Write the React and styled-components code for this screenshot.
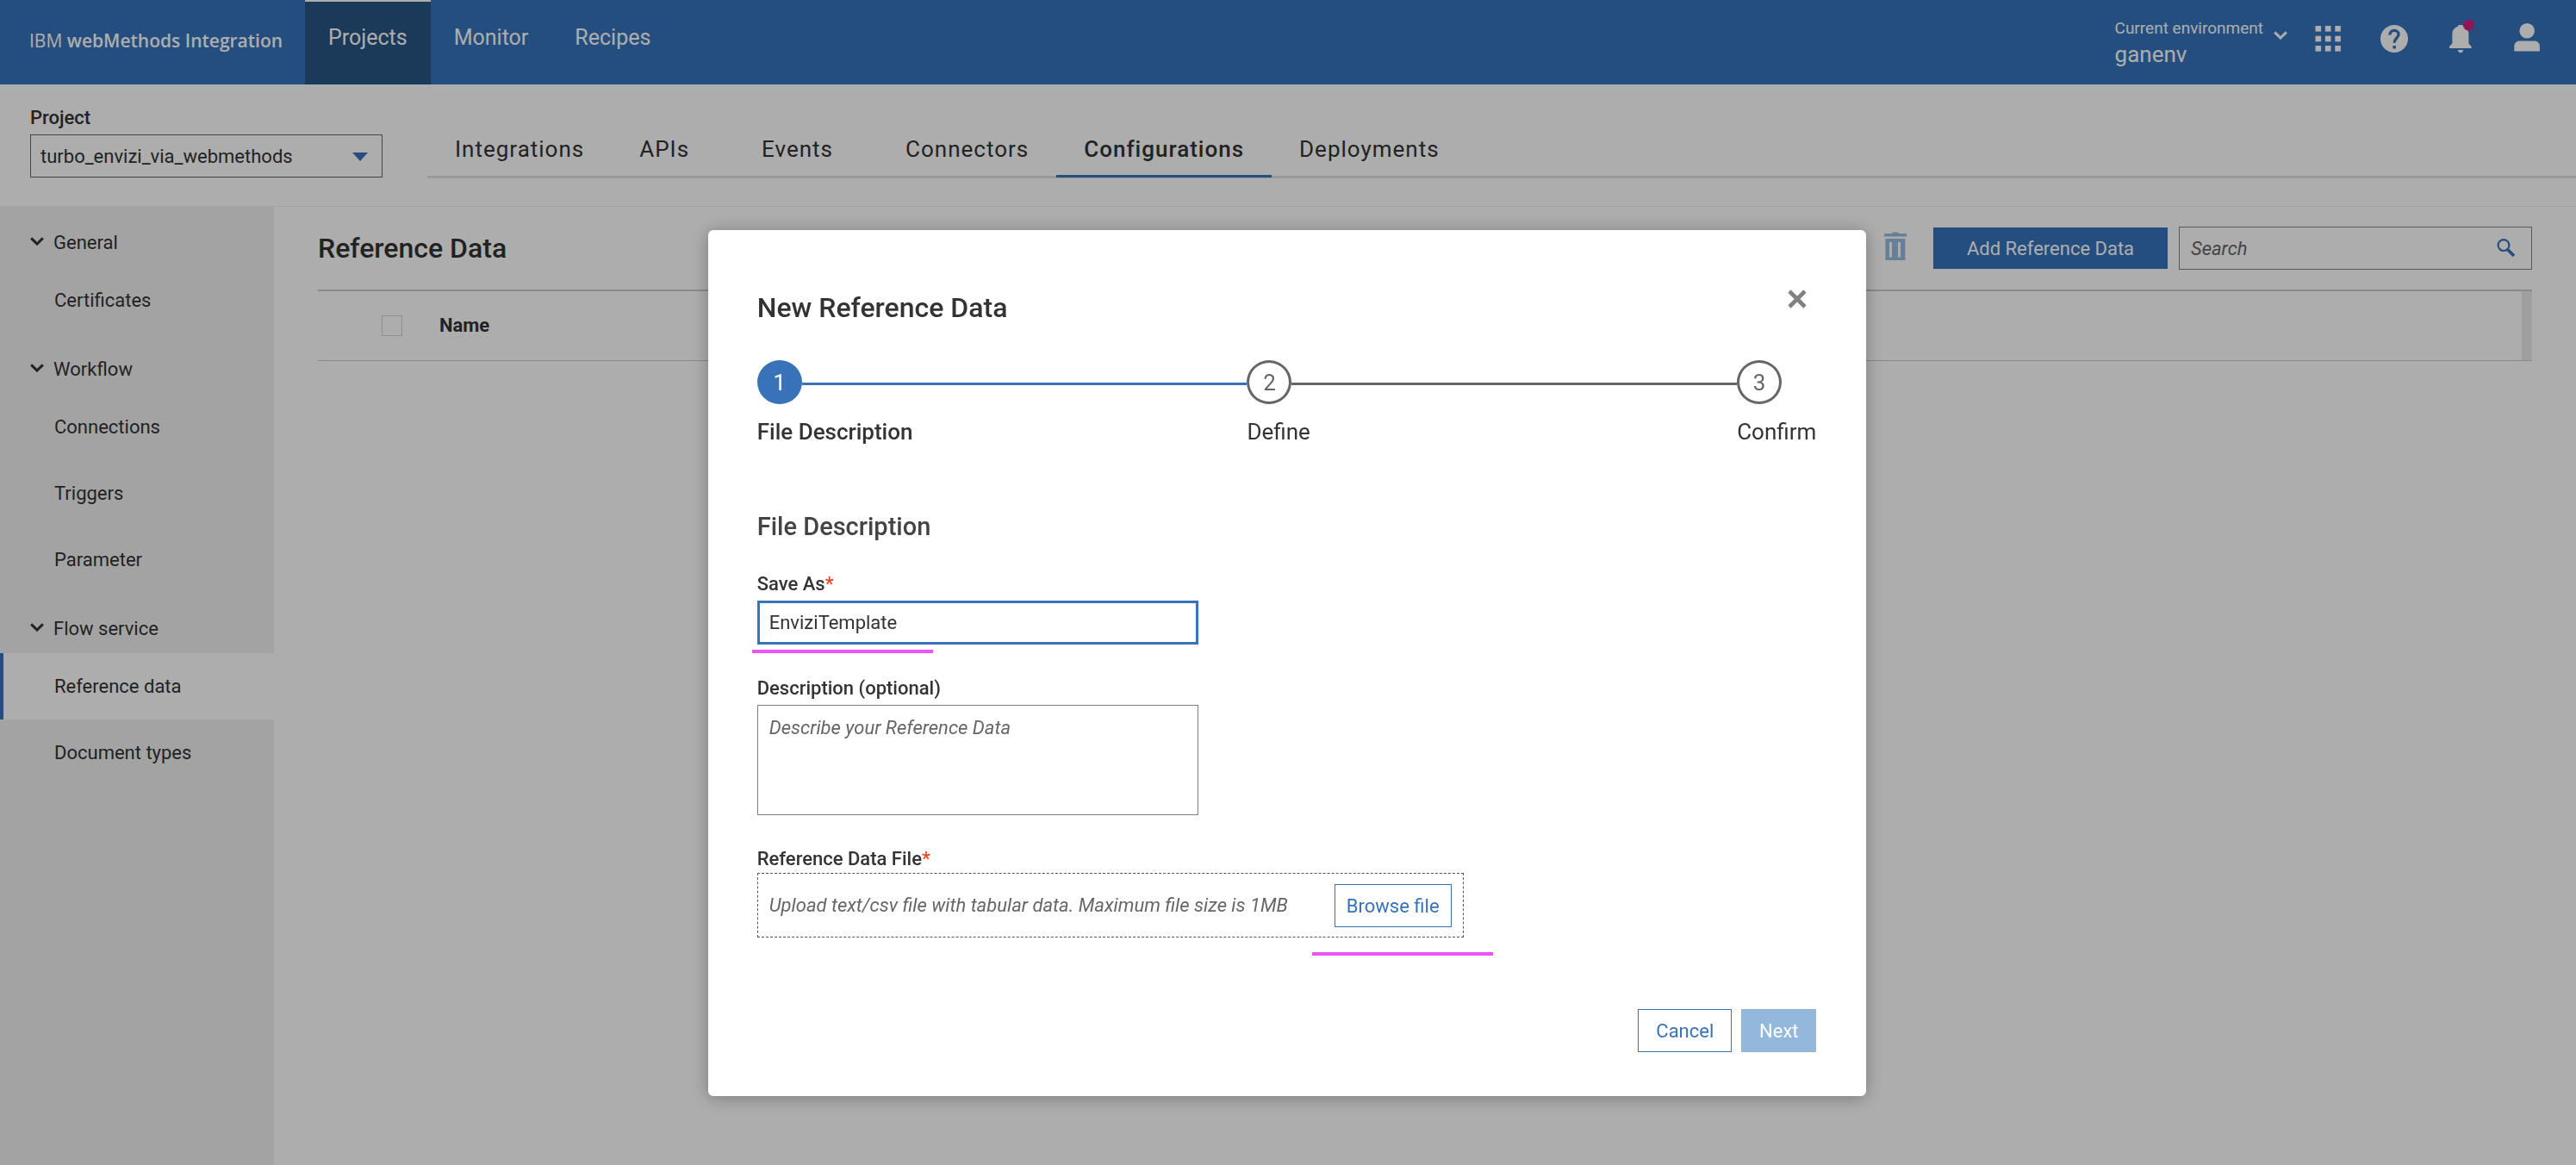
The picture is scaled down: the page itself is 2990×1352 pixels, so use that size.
import React from "react";
import styled, { createGlobalStyle, css } from "styled-components";

const c = {
  blue: "#3674bc",
  modalBlue: "#3873b9",
  navy: "#285483",
  ink: "#333333",
  muted: "#666666",
  panel: "#f1f1f1",
  line: "#cbcbcb",
  pale: "#94b7dc",
  marker: "#ee53f5",
};

const GlobalStyle = createGlobalStyle`
  *, *::before, *::after { box-sizing: border-box; }
  body { margin: 0; background: #fff; }
  body, button, input, textarea, select {
    font-family: Roboto, "Liberation Sans", sans-serif;
    font-size: 22px;
    font-weight: 400;
    line-height: 30px;
    color: ${c.ink};
  }
  button { cursor: pointer; }
  a { color: inherit; text-decoration: none; }
  h1, h2 { margin: 0; font-weight: 500; }
  ul, ol { margin: 0; padding: 0; list-style: none; }
`;

const Page = styled.div`
  display: flex;
  flex-direction: column;
  min-height: 100vh;
`;

/* Top bar */
const TopBar = styled.header`
  display: flex;
  height: 98px;
  padding-right: 19px;
  background: ${c.blue};
  color: #fff;
`;

const Brand = styled.div`
  display: flex;
  align-items: center;
  width: 354px;
  padding: 0 0 4px 34px;
  white-space: pre;
  font-family: "Open Sans", sans-serif;
  font-size: 21px;
  strong { font-weight: 600; }
`;

const TopNav = styled.nav`
  display: flex;
  flex: 1;
`;

const TopLink = styled.a`
  display: flex;
  align-items: center;
  padding: 0 27px 12px;
  border-top: 2px solid ${(p) => (p.$active ? "#fff" : "transparent")};
  background: ${(p) => (p.$active ? c.navy : "transparent")};
  font-size: 25px;
`;

const TopTools = styled.div`
  display: flex;
  align-items: center;
  padding-bottom: 9px;
`;

const Environment = styled.button`
  display: flex;
  align-items: flex-start;
  gap: 12px;
  margin-right: 8px;
  padding: 7px 0 0;
  border: 0;
  background: none;
  color: #fff;
  text-align: left;
  svg { margin-top: 18px; }
`;

const EnvironmentText = styled.span`
  display: flex;
  flex-direction: column;
  line-height: 30px;
  font-size: 26px;
  small { font-size: 19px; }
`;

const ToolButton = styled.button`
  display: flex;
  justify-content: center;
  width: 77px;
  padding: 0;
  border: 0;
  background: none;
  color: #fff;
`;

/* Project bar */
const ProjectBar = styled.section`
  display: flex;
  align-items: flex-end;
  gap: 52px;
  padding: 24px 0 32px 35px;
  border-bottom: 1px solid ${c.panel};
`;

const ProjectField = styled.div`
  display: flex;
  flex-direction: column;
  gap: 4px;
  width: 409px;
  padding-bottom: 1px;
  label { font-weight: 500; }
`;

const SelectWrap = styled.div`
  position: relative;
  svg {
    position: absolute;
    right: 17px;
    top: 21px;
    pointer-events: none;
  }
`;

const Select = styled.select`
  display: block;
  width: 100%;
  height: 50px;
  padding: 2px 11px 0;
  border: 1px solid ${c.muted};
  border-radius: 0;
  appearance: none;
  background: transparent;
`;

const Tabs = styled.nav`
  display: flex;
  flex: 1;
  border-bottom: 3px solid #e2e2e2;
`;

const Tab = styled.a`
  margin: 0 ${(p) => (p.$spaced ? 20 : 0)}px -2px 0;
  padding: 0 32px 15px;
  border-bottom: 3px solid ${(p) => (p.$active ? c.blue : "transparent")};
  font-size: 26px;
  font-weight: ${(p) => (p.$active ? 500 : 400)};
  letter-spacing: 1px;
`;

/* Body */
const Body = styled.div`
  display: flex;
  flex: 1;
`;

const Sidebar = styled.nav`
  width: 318px;
  background: ${c.panel};
`;

const GroupButton = styled.button`
  display: flex;
  align-items: center;
  gap: 11px;
  width: 100%;
  height: 70px;
  padding: 14px 0 0 35px;
  border: 0;
  background: none;
  svg { margin-bottom: 4px; }
`;

const SideLink = styled.a`
  display: flex;
  align-items: center;
  height: 77px;
  padding-left: 59px;
  border-left: 4px solid ${(p) => (p.$active ? c.blue : "transparent")};
  background: ${(p) => (p.$active ? "#fff" : "transparent")};
`;

const Main = styled.main`
  flex: 1;
  padding: 23px 51px 0;
`;

const Toolbar = styled.div`
  display: flex;
  align-items: center;
  margin-bottom: 23px;
`;

const PageTitle = styled.h1`
  flex: 1;
  font-size: 32px;
`;

const IconButton = styled.button`
  display: flex;
  margin-right: 31px;
  padding: 0 0 4px;
  border: 0;
  background: none;
`;

const buttonBase = css`
  height: 50px;
  padding: 2px 0 0;
  border: 1px solid ${c.modalBlue};
  border-radius: 0;
`;

const AddButton = styled.button`
  width: 272px;
  height: 48px;
  margin-right: 13px;
  padding: 2px 0 0;
  border: 0;
  background: ${c.blue};
  color: #fff;
`;

const SearchBox = styled.label`
  display: flex;
  align-items: center;
  width: 410px;
  height: 50px;
  padding: 0 18px 0 13px;
  border: 1px solid #808080;
`;

const SearchInput = styled.input`
  flex: 1;
  min-width: 0;
  padding: 2px 0 0;
  border: 0;
  outline: 0;
  background: none;
  &::placeholder { color: ${c.muted}; font-style: italic; opacity: 1; }
`;

const Table = styled.table`
  width: 100%;
  border-collapse: collapse;
  border-top: 2px solid ${c.line};
  border-bottom: 1px solid ${c.line};
  th {
    height: 81px;
    padding: 0;
    text-align: left;
    font-weight: 700;
  }
`;

const CheckCell = styled.th`
  width: 141px;
  && { padding-left: 74px; }
`;

const GutterCell = styled.th`
  width: 12px;
  background: #ebebeb;
`;

const Checkbox = styled.input`
  display: block;
  width: 24px;
  height: 24px;
  margin: 0;
  border: 1px solid #d2d2d2;
  appearance: none;
`;

/* Dialog */
const Backdrop = styled.div`
  position: fixed;
  inset: 0;
  display: flex;
  justify-content: center;
  align-items: flex-start;
  padding: 267px 2px 0 0;
  background: rgba(0, 0, 0, 0.32);
`;

const Dialog = styled.section`
  width: 45%;
  padding: 58px 58px 51px 57px;
  border-radius: 6px;
  background: #fff;
  box-shadow: 0 2px 20px rgba(0, 0, 0, 0.3);
`;

const DialogHeader = styled.div`
  display: flex;
  justify-content: space-between;
  margin-bottom: 41px;
`;

const DialogTitle = styled.h1`
  padding-top: 12px;
  font-size: 32px;
  line-height: 40px;
`;

const CloseButton = styled.button`
  display: flex;
  align-items: center;
  justify-content: center;
  width: 44px;
  height: 44px;
  padding: 0;
  border: 0;
  background: none;
`;

const Steps = styled.ol`
  display: flex;
  margin-bottom: 77px;
`;

const Step = styled.li`
  flex: 1;
  display: flex;
  flex-direction: column;
  gap: 17px;
  font-size: 26px;
  font-weight: ${(p) => (p.$current ? 500 : 400)};
  &:last-child { flex: none; }
`;

const StepTrack = styled.div`
  display: flex;
  align-items: center;
  &::after {
    content: "";
    flex: 1;
    height: 3px;
    margin-top: 4px;
    background: ${(p) => (p.$current ? c.modalBlue : c.muted)};
  }
  li:last-child > &::after { display: none; }
`;

const StepCircle = styled.span`
  display: flex;
  align-items: center;
  justify-content: center;
  width: 52px;
  height: 51px;
  border: 3px solid ${(p) => (p.$current ? c.modalBlue : c.muted)};
  border-radius: 50%;
  background: ${(p) => (p.$current ? c.modalBlue : "#fff")};
  color: ${(p) => (p.$current ? "#fff" : c.muted)};
  font-weight: 400;
`;

const SectionTitle = styled.h2`
  margin-bottom: 34px;
  color: #444;
  font-size: 29px;
  line-height: 36px;
`;

const Form = styled.form`
  display: flex;
  flex-direction: column;
  gap: 36px;
`;

const Field = styled.div`
  position: relative;
  display: flex;
  flex-direction: column;
  align-items: flex-start;
  gap: ${(p) => (p.$tight ? "1px" : "4px")};
  label { font-weight: 500; }
`;

const Required = styled.span`
  color: #ee4023;
`;

const TextInput = styled.input`
  width: 512px;
  height: 51px;
  padding: 0 11px;
  border: 3px solid ${c.modalBlue};
  border-radius: 0;
  outline: 0;
`;

const TextArea = styled.textarea`
  display: block;
  width: 512px;
  height: 128px;
  padding: 11px 13px;
  border: 1px solid #808080;
  border-radius: 0;
  resize: none;
  &::placeholder { color: ${c.muted}; font-style: italic; opacity: 1; }
`;

const DropZone = styled.div`
  display: flex;
  align-items: center;
  justify-content: space-between;
  width: 820px;
  height: 75px;
  padding: 0 13px;
  border: 1px dashed #555;
  color: ${c.muted};
  em { font-style: italic; }
`;

const OutlineButton = styled.button`
  ${buttonBase}
  width: ${(p) => p.$width}px;
  background: #fff;
  color: ${c.modalBlue};
`;

const NextButton = styled.button`
  ${buttonBase}
  width: 87px;
  border-color: ${c.pale};
  background: ${c.pale};
  color: #fff;
`;

const Marker = styled.span`
  position: absolute;
  left: ${(p) => p.$left}px;
  top: calc(100% + ${(p) => p.$below}px);
  width: 210px;
  height: 4px;
  background: ${c.marker};
`;

const DialogFooter = styled.div`
  display: flex;
  justify-content: flex-end;
  gap: 11px;
  margin-top: 83px;
`;

const Chevron = ({ width = 16, color = "currentColor", weight = 3 }) => (
  <svg width={width} height={(width * 10) / 16} viewBox="0 0 16 10" aria-hidden="true">
    <path d="M1.2 1.4 L8 8 L14.8 1.4" fill="none" stroke={color} strokeWidth={weight} />
  </svg>
);

const GridIcon = () => (
  <svg width="40" height="40" viewBox="0 0 40 40" fill="currentColor" aria-hidden="true">
    {[5, 16.7, 28].map((y) =>
      [5.5, 16.9, 28.3].map((x) => <rect key={`${x}-${y}`} x={x} y={y} width="6.6" height="6.6" />)
    )}
  </svg>
);

const HelpIcon = () => (
  <svg width="40" height="40" viewBox="0 0 40 40" aria-hidden="true">
    <circle cx="20" cy="20" r="16" fill="currentColor" />
    <path
      d="M14.9 15.6 C14.9 12.4 17 10.4 20 10.4 C23 10.4 25.1 12.4 25.1 15.1 C25.1 18.9 20.1 19.3 20.1 24.8"
      fill="none"
      stroke={c.blue}
      strokeWidth="3.3"
    />
    <rect x="18.4" y="28" width="3.5" height="3.5" fill={c.blue} />
  </svg>
);

const BellIcon = () => (
  <svg width="40" height="40" viewBox="0 0 40 40" aria-hidden="true">
    <path
      fill="currentColor"
      d="M17.3 4 H22.7 V5.6 C26.8 6.8 29.4 10 29.4 14.4 V25.4 L32.6 29 V31 H7 V29 L10.4 25.4 V14.4 C10.4 10 13.2 6.8 17.3 5.6 Z M16.8 33 H23.2 C23 35 21.7 36.2 20 36.2 C18.3 36.2 17 35 16.8 33 Z"
    />
    <circle cx="29.6" cy="4" r="6.6" fill="#cf2680" />
  </svg>
);

const BellSvgFrame = styled.span`
  display: flex;
  svg { overflow: visible; }
`;

const UserIcon = () => (
  <svg width="40" height="40" viewBox="0 0 40 40" fill="currentColor" aria-hidden="true">
    <circle cx="20.2" cy="10.7" r="8.8" />
    <path d="M5.3 34.4 V28.6 C5.3 25 8 22.4 11.6 22.4 H28.6 C32.2 22.4 34.9 25 34.9 28.6 V34.4 Z" />
  </svg>
);

const TrashIcon = () => (
  <svg width="26" height="34" viewBox="0 0 26 34" aria-hidden="true">
    <path
      fill="#98bbdf"
      fillRule="evenodd"
      d="M9 2 L10 0.6 H16 L17 2 H26 V5.4 H0 V2 Z M1.4 8 H24.4 V33 H1.4 Z M6 12 V29.4 H9 V12 Z M16 12 V29.4 H19 V12 Z"
    />
  </svg>
);

const SearchIcon = () => (
  <svg width="22" height="24" viewBox="0 0 22 24" fill="none" stroke={c.blue} aria-hidden="true">
    <circle cx="8" cy="8.6" r="6.4" strokeWidth="2.2" />
    <path d="M12.6 13.4 L20 21" strokeWidth="3.6" />
  </svg>
);

const CloseIcon = () => (
  <svg width="22" height="22" viewBox="0 0 22 22" aria-hidden="true">
    <path d="M2 2 L20 20 M20 2 L2 20" stroke="#808080" strokeWidth="4.6" />
  </svg>
);

const groups = [
  { name: "General", items: ["Certificates"] },
  { name: "Workflow", items: ["Connections", "Triggers", "Parameter"] },
  { name: "Flow service", items: ["Reference data", "Document types"] },
];

const tabs = [
  { name: "Integrations" },
  { name: "APIs", spaced: true },
  { name: "Events", spaced: true },
  { name: "Connectors" },
  { name: "Configurations" },
  { name: "Deployments" },
];

const steps = ["File Description", "Define", "Confirm"];

export default function App() {
  return (
    <>
      <GlobalStyle />
      <Page>
        <TopBar>
          <Brand>
            <span>IBM <strong>webMethods Integration</strong></span>
          </Brand>
          <TopNav aria-label="Product">
            <TopLink href="#projects" $active>Projects</TopLink>
            <TopLink href="#monitor">Monitor</TopLink>
            <TopLink href="#recipes">Recipes</TopLink>
          </TopNav>
          <TopTools>
            <Environment type="button">
              <EnvironmentText>
                <small>Current environment</small>
                ganenv
              </EnvironmentText>
              <Chevron />
            </Environment>
            <ToolButton type="button" aria-label="Apps"><GridIcon /></ToolButton>
            <ToolButton type="button" aria-label="Help"><HelpIcon /></ToolButton>
            <ToolButton type="button" aria-label="Notifications">
              <BellSvgFrame><BellIcon /></BellSvgFrame>
            </ToolButton>
            <ToolButton type="button" aria-label="Profile"><UserIcon /></ToolButton>
          </TopTools>
        </TopBar>

        <ProjectBar>
          <ProjectField>
            <label htmlFor="project">Project</label>
            <SelectWrap>
              <Select id="project" defaultValue="turbo">
                <option value="turbo">turbo_envizi_via_webmethods</option>
              </Select>
              <svg width="18" height="10" viewBox="0 0 18 10" aria-hidden="true">
                <path d="M0 0 H18 L9 10 Z" fill={c.blue} />
              </svg>
            </SelectWrap>
          </ProjectField>
          <Tabs aria-label="Project sections">
            {tabs.map((t) => (
              <Tab
                key={t.name}
                href={`#${t.name.toLowerCase()}`}
                $active={t.name === "Configurations"}
                $spaced={t.spaced}
              >
                {t.name}
              </Tab>
            ))}
          </Tabs>
        </ProjectBar>

        <Body>
          <Sidebar aria-label="Configurations">
            {groups.map((g) => (
              <div key={g.name}>
                <GroupButton type="button" aria-expanded="true">
                  <Chevron />
                  {g.name}
                </GroupButton>
                <ul>
                  {g.items.map((item) => (
                    <li key={item}>
                      <SideLink href="#item" $active={item === "Reference data"}>{item}</SideLink>
                    </li>
                  ))}
                </ul>
              </div>
            ))}
          </Sidebar>

          <Main>
            <Toolbar>
              <PageTitle>Reference Data</PageTitle>
              <IconButton type="button" aria-label="Delete" disabled><TrashIcon /></IconButton>
              <AddButton type="button">Add Reference Data</AddButton>
              <SearchBox>
                <SearchInput type="text" placeholder="Search" aria-label="Search" />
                <SearchIcon />
              </SearchBox>
            </Toolbar>
            <Table>
              <thead>
                <tr>
                  <CheckCell><Checkbox type="checkbox" aria-label="Select all" /></CheckCell>
                  <th>Name</th>
                  <GutterCell />
                </tr>
              </thead>
            </Table>
          </Main>
        </Body>
      </Page>

      <Backdrop>
        <Dialog role="dialog" aria-modal="true" aria-labelledby="dialog-title">
          <DialogHeader>
            <DialogTitle id="dialog-title">New Reference Data</DialogTitle>
            <CloseButton type="button" aria-label="Close"><CloseIcon /></CloseButton>
          </DialogHeader>
          <Steps>
            {steps.map((s, i) => (
              <Step key={s} $current={i === 0}>
                <StepTrack $current={i === 0}>
                  <StepCircle $current={i === 0}>{i + 1}</StepCircle>
                </StepTrack>
                <span>{s}</span>
              </Step>
            ))}
          </Steps>
          <SectionTitle>File Description</SectionTitle>
          <Form onSubmit={(e) => e.preventDefault()}>
            <Field>
              <label htmlFor="save-as">Save As<Required>*</Required></label>
              <TextInput id="save-as" type="text" defaultValue="EnviziTemplate" />
              <Marker $left={-6} $below={6} />
            </Field>
            <Field>
              <label htmlFor="description">Description (optional)</label>
              <TextArea id="description" placeholder="Describe your Reference Data" />
            </Field>
            <Field $tight>
              <label htmlFor="browse">Reference Data File<Required>*</Required></label>
              <DropZone>
                <em>Upload text/csv file with tabular data. Maximum file size is 1MB</em>
                <OutlineButton id="browse" type="button" $width={136}>Browse file</OutlineButton>
              </DropZone>
              <Marker $left={644} $below={17} />
            </Field>
          </Form>
          <DialogFooter>
            <OutlineButton type="button" $width={109}>Cancel</OutlineButton>
            <NextButton type="button">Next</NextButton>
          </DialogFooter>
        </Dialog>
      </Backdrop>
    </>
  );
}
